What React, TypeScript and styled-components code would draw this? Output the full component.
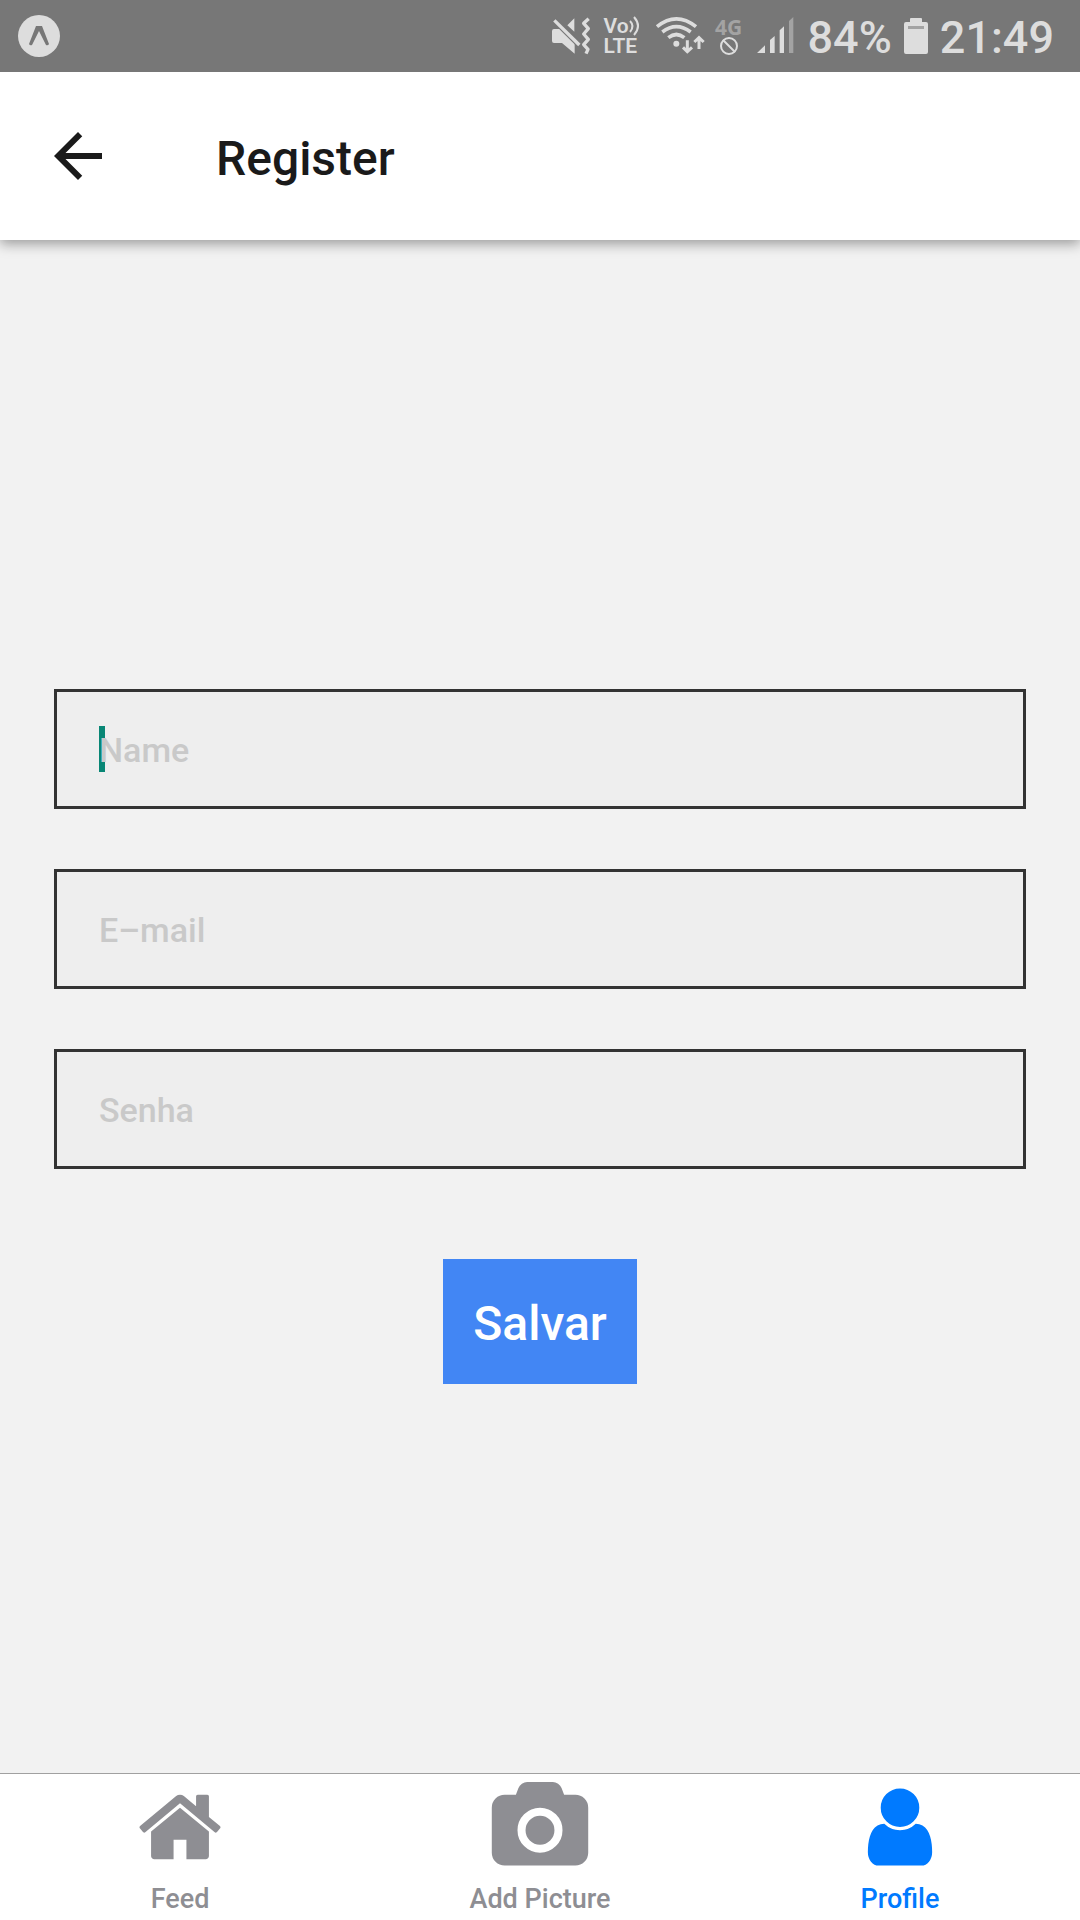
import React from "react";
import styled, { createGlobalStyle } from "styled-components";

const GlobalStyle = createGlobalStyle`
  *, *::before, *::after { box-sizing: border-box; }
  body { margin: 0; background: #f2f2f2; font-family: Roboto, "Noto Sans", sans-serif; font-weight: 500; }
`;

const Screen = styled.div`
  display: flex;
  flex-direction: column;
  min-height: 100vh;
`;

const StatusBar = styled.div`
  position: relative;
  z-index: 1;
  display: flex;
  align-items: center;
  justify-content: space-between;
  height: 72px;
  padding: 0 26px 0 18px;
  background: #777777;
  color: #dddddd;
`;

const StatusGroup = styled.div`
  display: flex;
  align-items: center;
  gap: 12px;
`;

const StatusText = styled.span`
  padding-top: 4px;
  font-size: 45px;
  line-height: 68px;
`;

const Volte = styled.div`
  display: flex;
  flex-direction: column;
  width: 40px;
  font-size: 21px;
  line-height: 20px;
  font-family: Roboto, "Noto Sans", sans-serif;
  font-weight: 600;
`;

const VolteTop = styled.span`
  display: flex;
  align-items: center;
`;

const Network = styled.div`
  display: flex;
  flex-direction: column;
  align-items: center;
  width: 26px;
  color: #a3a3a3;
  font-family: "Noto Sans", sans-serif;
  font-size: 21px;
  line-height: 20px;
  font-weight: 700;
`;

const Icon = styled.svg`
  display: block;
  flex: none;
  overflow: visible;
`;

const Header = styled.header`
  display: flex;
  align-items: center;
  gap: 102px;
  height: 168px;
  padding: 0 42px;
  background: #ffffff;
  color: #1a1a1a;
  box-shadow: 0 4px 12px rgba(0, 0, 0, 0.36);
`;

const BackButton = styled.button`
  padding: 0;
  border: 0;
  background: none;
  color: inherit;
`;

const Title = styled.h1`
  margin: 0;
  padding-top: 6px;
  font-size: 48px;
  line-height: 64px;
  font-weight: 500;
`;

const Form = styled.form`
  flex: 1;
  display: flex;
  flex-direction: column;
  justify-content: center;
  align-items: center;
  padding: 0 54px;
`;

const Field = styled.label`
  position: relative;
  display: block;
  width: 100%;
  height: 120px;
  margin-top: 60px;
  background: #eeeeee;
`;

const Caret = styled.span`
  position: absolute;
  left: 45px;
  top: 37px;
  width: 6px;
  height: 46px;
  background: #088675;
`;

const Input = styled.input`
  position: relative;
  display: block;
  width: 100%;
  height: 100%;
  padding: 2px 42px 0;
  border: 3px solid #333333;
  border-radius: 0;
  outline: 0;
  background: transparent;
  color: #333333;
  font: inherit;
  font-size: 34px;
  &::placeholder { color: #c9c9c9; opacity: 1; }
`;

const SaveButton = styled.button`
  margin-top: 90px;
  padding: 32px 30px 28px;
  border: 0;
  background: #4286f4;
  color: #ffffff;
  font: inherit;
  font-size: 48px;
  line-height: 65px;
`;

const TabBar = styled.nav`
  display: flex;
  border-top: 1px solid #a0a0a0;
  background: #ffffff;
`;

const Tab = styled.a<{ $active?: boolean }>`
  flex: 1;
  display: flex;
  flex-direction: column;
  align-items: center;
  gap: 8px;
  padding: 8px 0 2px;
  color: ${(p) => (p.$active ? "#007aff" : "#8e8e93")};
  font-size: 27px;
  line-height: 38px;
  text-decoration: none;
`;

const tabs = [
  {
    label: "Feed",
    path: "M1472 992v480q0 26-19 45t-45 19h-384v-384h-256v384h-384q-26 0-45-19t-19-45v-480q0-1 .5-3t.5-3l575-474 575 474q1 2 1 6zm223-69l-62 74q-8 9-21 11h-3q-13 0-21-7l-692-577-692 577q-12 8-24 7-13-2-21-11l-62-74q-8-10-7-23.5t11-21.5l719-599q32-26 76-26t76 26l244 204v-195q0-14 9-23t23-9h192q14 0 23 9t9 23v408l219 182q10 8 11 21.5t-7 23.5z",
  },
  {
    label: "Add Picture",
    path: "M896 672q119 0 203.5 84.5t84.5 203.5-84.5 203.5-203.5 84.5-203.5-84.5-84.5-203.5 84.5-203.5 203.5-84.5zm704-416q106 0 181 75t75 181v896q0 106-75 181t-181 75h-1408q-106 0-181-75t-75-181v-896q0-106 75-181t181-75h224l51-136q19-49 69.5-84.5t103.5-35.5h512q53 0 103.5 35.5t69.5 84.5l51 136h224zm-704 1152q185 0 316.5-131.5t131.5-316.5-131.5-316.5-316.5-131.5-316.5 131.5-131.5 316.5 131.5 316.5 316.5 131.5z",
  },
  {
    label: "Profile",
    active: true,
    path: "M1536 1399q0 109-62.5 187t-150.5 78h-854q-88 0-150.5-78t-62.5-187q0-85 8.5-160.5t31.5-152 58.5-131 94-89 134.5-34.5q131 128 313 128t313-128q76 0 134.5 34.5t94 89 58.5 131 31.5 152 8.5 160.5zm-256-887q0 159-112.5 271.5t-271.5 112.5-271.5-112.5-112.5-271.5 112.5-271.5 271.5-112.5 271.5 112.5 112.5 271.5z",
  },
];

const fields = [
  { label: "Name", type: "text", focused: true },
  { label: "E–mail", type: "email" },
  { label: "Senha", type: "password" },
];

function StatusIcons() {
  return (
    <StatusGroup>
      {/* muted speaker with vibration wave */}
      <Icon width="40" height="40" viewBox="36 48 120 120" fill="#dddddd">
        <path d="M103 55V95L82 76ZM42 87H62L104 128V161L66 129H42Q36 129 36 123V93Q36 87 42 87Z" />
        <path d="M43 61L118 135" stroke="#777777" strokeWidth="17" />
        <path d="M43 61L118 135" stroke="#dddddd" strokeWidth="10" />
        <path d="M146 56L131 70L145 86L131 102L145 118L131 134L144 148L138 161" fill="none" stroke="#dddddd" strokeWidth="10" strokeLinejoin="round" />
      </Icon>
      <Volte>
        <VolteTop>
          Vo
          <Icon width="12" height="20" viewBox="0 0 12 20" fill="none" stroke="#dddddd" strokeWidth="2">
            <path d="M1 5Q6 10 1 16M5 1Q13 10 5 19" />
          </Icon>
        </VolteTop>
        <span>LTE</span>
      </Volte>
      {/* wifi with traffic arrows */}
      <Icon width="48" height="40" viewBox="348 48 144 120" fill="none" stroke="#dddddd" strokeWidth="11">
        <path d="M351 80Q409 33 468 80M367 96Q409 64 452 96M385 113Q409 94 433 113" />
        <circle cx="409" cy="131" r="9" fill="#dddddd" stroke="none" />
        <path d="M442 121V153M429 142L442 155L456 142M477 147V114M463 126L477 113L491 126" strokeWidth="9" />
      </Icon>
      <Network>
        4G
        <Icon width="18" height="18" viewBox="0 0 18 18" fill="none" stroke="#dddddd" strokeWidth="2">
          <circle cx="9" cy="9" r="8" />
          <path d="M3 3L15 15" />
        </Icon>
      </Network>
      <Icon width="42" height="40" viewBox="642 48 126 120" fill="#dddddd">
        <path d="M651 159L675 136V159ZM690 120L704 108V159H690ZM719 91L732 79V159H719Z" />
        <path d="M747 63L760 51V159H747Z" fill="#a3a3a3" />
      </Icon>
      <StatusText>84%</StatusText>
      <Icon width="24" height="36" viewBox="0 0 24 36" fill="#dddddd">
        <path d="M7 0H17Q18 0 18 1V4H22Q24 4 24 6V34Q24 36 22 36H2Q0 36 0 34V6Q0 4 2 4H6V1Q6 0 7 0Z" />
        <path d="M4 8H20V11H4Z" fill="#a3a3a3" />
      </Icon>
      <StatusText>21:49</StatusText>
    </StatusGroup>
  );
}

export default function App() {
  return (
    <Screen>
      <GlobalStyle />
      <StatusBar>
        <Icon width="42" height="42" viewBox="0 0 42 42">
          <circle cx="21" cy="21" r="21" fill="#dddddd" />
          <path d="M18 11H24L31 29Q30 31 28 30L21 16L14 30Q12 31 11 29Z" fill="#777777" />
        </Icon>
        <StatusIcons />
      </StatusBar>
      <Header>
        <BackButton type="button" aria-label="Back">
          <Icon width="72" height="72" viewBox="0 0 24 24" fill="currentColor">
            <path d="M20 11H7.83l5.59-5.59L12 4l-8 8 8 8 1.41-1.41L7.83 13H20v-2z" />
          </Icon>
        </BackButton>
        <Title>Register</Title>
      </Header>
      <Form onSubmit={(e) => e.preventDefault()}>
        {fields.map((f) => (
          <Field key={f.label}>
            {f.focused && <Caret />}
            <Input type={f.type} placeholder={f.label} aria-label={f.label} />
          </Field>
        ))}
        <SaveButton type="submit">Salvar</SaveButton>
      </Form>
      <TabBar>
        {tabs.map((t) => (
          <Tab key={t.label} href="#" $active={t.active}>
            <Icon width="90" height="90" viewBox="0 0 1792 1792" fill="currentColor">
              <path d={t.path} />
            </Icon>
            {t.label}
          </Tab>
        ))}
      </TabBar>
    </Screen>
  );
}
